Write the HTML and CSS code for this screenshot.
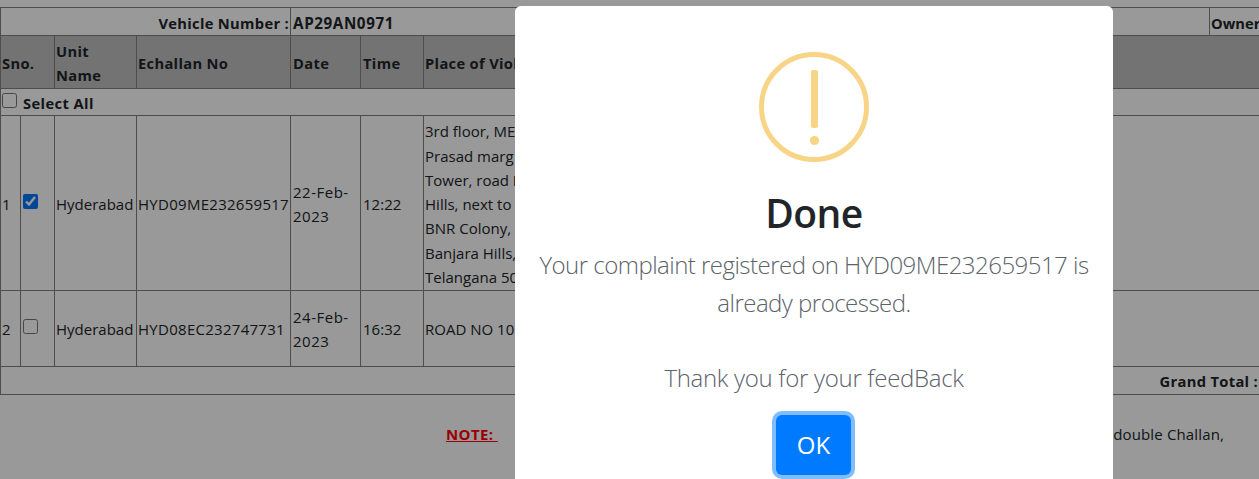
FILE: index.html
```html
<!DOCTYPE html>
<html lang="en">
<head>
<meta charset="utf-8">
<title>E-Challan</title>
<link rel="stylesheet" href="styles.css">
</head>
<body>
<main class="page">
  <table class="challans">
    <colgroup><col class="c-sno"><col class="c-check"><col class="c-unit"><col class="c-challan"><col class="c-date"><col class="c-time"><col class="c-place"><col class="c-owner"></colgroup>
    <tr class="r-vehicle"><th colspan="4" class="right">Vehicle Number :</th><th colspan="3" class="plate">AP29AN0971</th><th class="owner">Owner</th></tr>
    <tr class="r-head"><th colspan="2">Sno.</th><th>Unit<br>Name</th><th>Echallan No</th><th class="inset">Date</th><th class="inset">Time</th><th colspan="2">Place of Violation</th></tr>
    <tr class="r-all"><th colspan="8"><label class="select-all"><input type="checkbox"><span>Select All</span></label></th></tr>
    <tr class="r-one"><td>1</td><td><input type="checkbox" checked></td><td>Hyderabad</td><td class="num">HYD09ME232659517</td><td class="date">22-Feb-<br>2023</td><td class="inset">12:22</td><td colspan="2" class="place">3rd floor, ME<br>Prasad marg<br>Tower, road N<br>Hills, next to<br>BNR Colony,<br>Banjara Hills,<br>Telangana 500</td></tr>
    <tr class="r-two"><td>2</td><td><input type="checkbox"></td><td>Hyderabad</td><td class="num">HYD08EC232747731</td><td class="date">24-Feb-<br>2023</td><td class="inset">16:32</td><td colspan="2" class="place">ROAD NO 10</td></tr>
    <tr class="r-total"><th colspan="8" class="right">Grand Total :</th></tr>
  </table>
  <div class="note"><strong class="note-label">NOTE:&nbsp;</strong><span class="note-text">double Challan,</span></div>
</main>
<div class="overlay">
  <section class="modal" role="dialog" aria-labelledby="title">
    <svg class="warning" width="110" height="110" viewBox="0 0 110 110" aria-hidden="true">
      <circle cx="55" cy="55" r="52.5" fill="none" stroke="#f8d486" stroke-width="5"/>
      <rect x="52" y="18" width="7" height="58" rx="2" fill="#f8d486"/>
      <circle cx="55.5" cy="88.5" r="4.6" fill="#f8d486"/>
    </svg>
    <h2 class="title" id="title">Done</h2>
    <p class="message"><span>Your complaint registered on HYD09ME232659517 is</span><span>already processed.</span><span class="thanks">Thank you for your feedBack</span></p>
    <button class="ok" type="button">OK</button>
  </section>
</div>
</body>
</html>
```
FILE: styles.css
```css
* { box-sizing: border-box; }
html, body { margin: 0; height: 100%; overflow: hidden; }
body { background: #fff; color: #212529; font: 15px/24.3px "Segoe UI", "Open Sans", "Noto Sans", sans-serif; }
.page { width: 1259px; padding-top: 7px; }

.challans { width: 1259px; table-layout: fixed; border-collapse: separate; border-spacing: 0; border-bottom: 1px solid gray; white-space: nowrap; }
.c-sno { width: 20px; }
.c-check { width: 34px; }
.c-unit { width: 82px; }
.c-challan { width: 154px; }
.c-date { width: 70px; }
.c-time { width: 63px; }
.c-place { width: 786px; }
.c-owner { width: 50px; }
th, td { padding: 2px 1px 0; border: solid gray; border-width: 1px 0 0 1px; text-align: left; vertical-align: middle; }
th { font-weight: 700; font-size: 14.7px; letter-spacing: .32px; }
.right { text-align: right; }
.r-vehicle { height: 28px; }
.r-vehicle th { padding-top: 3px; }
.r-vehicle .plate { padding-left: 2px; font-size: 15.2px; letter-spacing: .6px; }
.r-vehicle .owner { padding-right: 0; letter-spacing: 0; }
.r-head { height: 53px; background: #c0c0c0; }
.r-all { height: 27px; }
.r-all th { padding-top: 0; }
.r-one { height: 175px; }
.r-two { height: 76px; }
.r-two td { padding-top: 0; }
.r-total { height: 28px; }
.r-total th { padding-top: 0; }
.inset, .date { padding-left: 2px; }
.date { letter-spacing: .5px; }
.num { letter-spacing: .28px; }
input { display: block; width: 15px; height: 15px; margin: 0 0 5px 1px; }
.select-all { display: flex; align-items: center; gap: 6px; height: 26px; }
.select-all input { margin: 0 0 4px; }
.select-all span { padding-top: 1px; letter-spacing: .4px; }

.note { display: flex; justify-content: space-between; width: 1224px; padding: 27px 0 0 446px; }
.note-label { color: #f00; text-decoration: underline; letter-spacing: .4px; }
.note-text { letter-spacing: .14px; }

.overlay { position: fixed; inset: 0; display: flex; justify-content: center; align-items: flex-start; padding-top: 6px; background: rgba(0, 0, 0, .4); }
.modal { display: flex; flex-direction: column; align-items: center; width: 598px; height: 500px; margin-left: 369px; padding-top: 46px; border-radius: 6px; background: #fff; }
.warning { flex: none; }
.title { margin: 27px 0 0; font-size: 39px; line-height: 48px; font-weight: 600; letter-spacing: -.5px; }
.message { display: flex; flex-direction: column; align-items: center; margin: 9px 0 0; color: #5c636a; font-size: 24px; line-height: 37.5px; font-weight: 300; letter-spacing: -.52px; white-space: nowrap; }
.thanks { margin-top: 37.5px; letter-spacing: -.3px; }
.ok { width: 75px; height: 60px; margin: 19px 2px 0 0; padding: 0 0 0 1px; border: 0; border-radius: 6px; background: #007bff; box-shadow: 0 0 0 4px rgba(0, 123, 255, .5); color: #fff; font: 400 24px/60px "Segoe UI", "Open Sans", sans-serif; }
```
